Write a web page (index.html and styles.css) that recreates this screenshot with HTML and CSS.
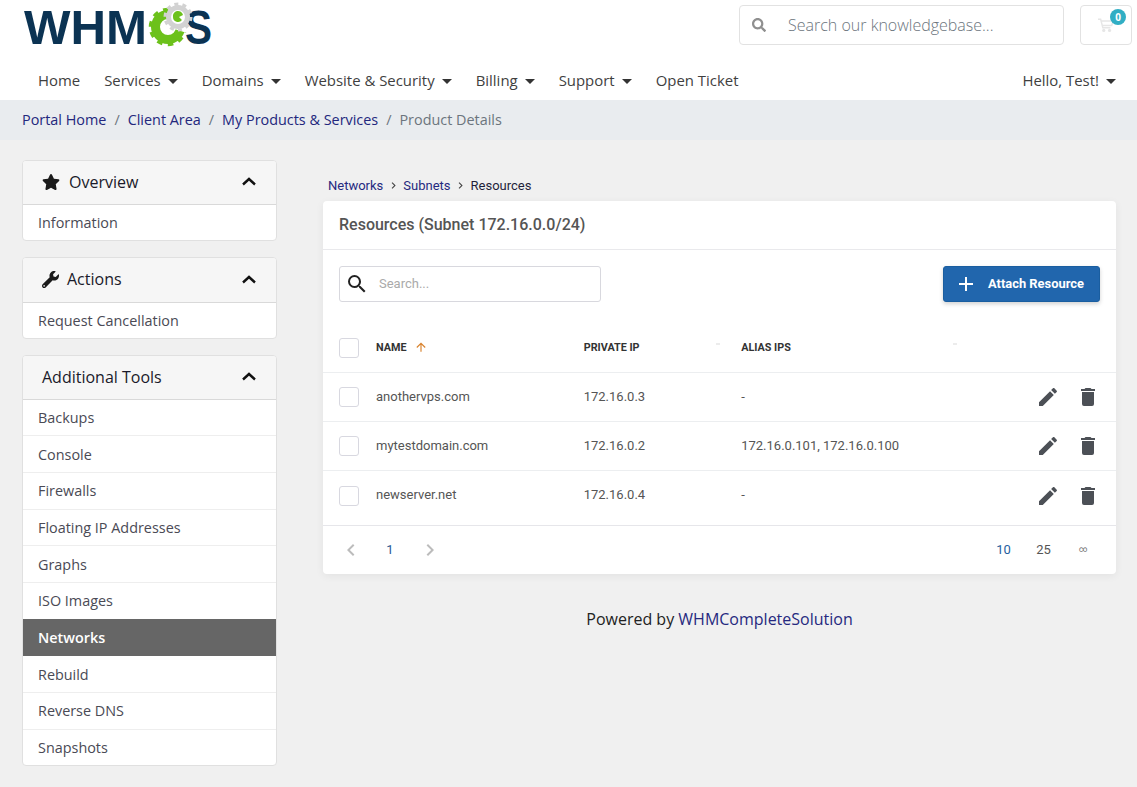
FILE: index.html
```html
<!DOCTYPE html>
<html lang="en">
<head>
<meta charset="utf-8">
<title>Product Details</title>
<link rel="stylesheet" href="styles.css">
</head>
<body>
<header class="site-header">
  <div class="top-row">
    <svg class="logo" viewBox="0 0 192 48" width="192" height="48" role="img" aria-label="WHMCS">
      <text class="logo-text" x="0" y="43.5" textLength="123" lengthAdjust="spacingAndGlyphs">WHM</text>
      <circle cx="144" cy="27" r="12.5" fill="none" stroke="#6cc11b" stroke-width="9"/>
      <circle cx="144" cy="27" r="17" fill="none" stroke="#6cc11b" stroke-width="4.5" stroke-dasharray="5.34 5.34"/>
      <path d="M144 27 L156 0 L176 0 L176 33 L163 33 Z" fill="#fff"/>
      <text class="logo-text" x="161" y="43.5" textLength="27" lengthAdjust="spacingAndGlyphs">S</text>
      <circle cx="154" cy="17" r="9.5" fill="#fff" stroke="#d2d2d2" stroke-width="5"/>
      <circle cx="154" cy="17" r="13" fill="none" stroke="#d2d2d2" stroke-width="3" stroke-dasharray="4 4.17"/>
      <path d="M149 17 a5 5 0 0 0 9 3 l-3-3 4-2 a5 5 0 0 0-10 2z" fill="#6cc11b"/>
    </svg>
    <div class="top-tools">
      <div class="kb-search">
        <svg class="kb-icon" viewBox="0 0 512 512"><path d="M505 442.7L405.3 343c-4.5-4.5-10.6-7-17-7H372c27.6-35.3 44-79.7 44-128C416 93.1 322.9 0 208 0S0 93.1 0 208s93.1 208 208 208c48.3 0 92.7-16.4 128-44v16.3c0 6.4 2.5 12.5 7 17l99.7 99.7c9.4 9.4 24.6 9.4 33.9 0l28.3-28.3c9.4-9.4 9.4-24.6.1-34zM208 336c-70.7 0-128-57.2-128-128 0-70.7 57.2-128 128-128 70.7 0 128 57.2 128 128 0 70.7-57.2 128-128 128z"/></svg>
        <span class="kb-placeholder">Search our knowledgebase...</span>
      </div>
      <div class="cart">
        <svg class="cart-icon" viewBox="0 0 18 16"><path d="M0 1h3l2.4 9.5h8.6M4 3h13l-1.6 5H5" fill="none" stroke="#e6e6e6" stroke-width="1.6"/><circle cx="6.5" cy="13.5" r="1.8" fill="#e6e6e6"/><circle cx="13" cy="13.5" r="1.8" fill="#e6e6e6"/></svg>
        <span class="cart-badge">0</span>
      </div>
    </div>
  </div>
  <nav class="main-nav">
    <ul class="nav-list">
      <li>Home</li>
      <li class="caret">Services</li>
      <li class="caret">Domains</li>
      <li class="caret">Website &amp; Security</li>
      <li class="caret">Billing</li>
      <li class="caret">Support</li>
      <li>Open Ticket</li>
    </ul>
    <div class="nav-user caret">Hello, Test!</div>
  </nav>
</header>

<div class="breadcrumb">
  <a>Portal Home</a><span class="sep">/</span><a>Client Area</a><span class="sep">/</span><a>My Products &amp; Services</a><span class="sep">/</span><span class="current">Product Details</span>
</div>

<div class="page">
  <aside class="sidebar">
    <section class="panel">
      <div class="panel-head">
        <svg class="head-icon star" viewBox="0 0 576 512"><path d="M259.3 17.8L194 150.2 47.9 171.5c-26.2 3.8-36.7 36.1-17.7 54.6l105.7 103-25 145.5c-4.5 26.3 23.2 46 46.4 33.7L288 439.6l130.7 68.7c23.2 12.2 50.9-7.4 46.4-33.7l-25-145.5 105.7-103c19-18.5 8.5-50.8-17.7-54.6L382 150.2 316.7 17.8c-11.7-23.6-45.6-23.9-57.4 0z"/></svg>
        <span class="head-title after-star">Overview</span>
        <svg class="chev" viewBox="0 0 14 9"><path d="M1 7.5l6-5.5 6 5.5" fill="none" stroke="#111" stroke-width="2.4"/></svg>
      </div>
      <div class="panel-item">Information</div>
    </section>
    <section class="panel">
      <div class="panel-head tall">
        <svg class="head-icon" viewBox="0 0 512 512"><path d="M507.73 109.1c-2.24-9.03-13.54-12.09-20.12-5.51l-74.36 74.36-67.88-11.31-11.31-67.88 74.36-74.36c6.62-6.62 3.43-17.9-5.66-20.16-47.38-11.74-99.55.91-136.58 37.93-39.64 39.64-50.55 97.1-34.05 147.2L18.74 402.76c-24.99 24.99-24.99 65.51 0 90.5 24.99 24.99 65.51 24.99 90.5 0l213.21-213.21c50.12 16.71 107.47 5.68 147.37-34.22 37.07-37.07 49.7-89.32 37.91-136.73zM64 472c-13.25 0-24-10.75-24-24 0-13.26 10.75-24 24-24s24 10.74 24 24c0 13.25-10.75 24-24 24z"/></svg>
        <span class="head-title">Actions</span>
        <svg class="chev" viewBox="0 0 14 9"><path d="M1 7.5l6-5.5 6 5.5" fill="none" stroke="#111" stroke-width="2.4"/></svg>
      </div>
      <div class="panel-item">Request Cancellation</div>
    </section>
    <section class="panel">
      <div class="panel-head">
        <span class="head-title plain">Additional Tools</span>
        <svg class="chev" viewBox="0 0 14 9"><path d="M1 7.5l6-5.5 6 5.5" fill="none" stroke="#111" stroke-width="2.4"/></svg>
      </div>
      <div class="panel-item long-first">Backups</div>
      <div class="panel-item">Console</div>
      <div class="panel-item">Firewalls</div>
      <div class="panel-item">Floating IP Addresses</div>
      <div class="panel-item">Graphs</div>
      <div class="panel-item">ISO Images</div>
      <div class="panel-item active">Networks</div>
      <div class="panel-item">Rebuild</div>
      <div class="panel-item">Reverse DNS</div>
      <div class="panel-item">Snapshots</div>
    </section>
  </aside>

  <main class="content">
    <div class="crumbs">
      <a>Networks</a>
      <svg class="crumb-sep" viewBox="0 0 24 24"><path d="M8.59 16.58L13.17 12 8.59 7.41 10 6l6 6-6 6z"/></svg>
      <a>Subnets</a>
      <svg class="crumb-sep" viewBox="0 0 24 24"><path d="M8.59 16.58L13.17 12 8.59 7.41 10 6l6 6-6 6z"/></svg>
      <span>Resources</span>
    </div>
    <section class="card">
      <h2 class="card-title">Resources (Subnet 172.16.0.0/24)</h2>
      <div class="toolbar">
        <div class="search">
          <svg class="search-icon" viewBox="3 3 18 18"><path d="M9.5 3A6.5 6.5 0 0 1 16 9.5c0 1.61-.59 3.09-1.56 4.23l.27.27h.79l5 5-1.5 1.5-5-5v-.79l-.27-.27A6.516 6.516 0 0 1 9.500 16 6.500 6.500 0 0 1 3 9.500 6.500 6.500 0 0 1 9.500 3m0 2C7 5 5 7 5 9.500S7 14 9.500 14 14 12 14 9.500 12 5 9.500 5z"/></svg>
          <span class="search-placeholder">Search...</span>
        </div>
        <button class="btn-attach" type="button">
          <svg class="plus" viewBox="5 5 14 14"><path d="M19 13h-6v6h-2v-6H5v-2h6V5h2v6h6z"/></svg>
          <span class="btn-label">Attach Resource</span>
        </button>
      </div>
      <div class="row head-row">
        <span class="check"></span>
        <span class="col-name th">NAME <svg class="sort" viewBox="0 0 24 24"><path d="M13 20h-2V8l-5.500 5.500-1.420-1.420L12 4.160l7.920 7.920-1.420 1.420L13 8z"/></svg></span>
        <span class="col-ip th">PRIVATE IP<i class="tick tick-a"></i></span>
        <span class="col-alias th">ALIAS IPS<i class="tick tick-b"></i></span>
      </div>
      <div class="row">
        <span class="check"></span>
        <span class="col-name">anothervps.com</span>
        <span class="col-ip">172.16.0.3</span>
        <span class="col-alias">-</span>
        <span class="actions">
          <svg class="act" viewBox="0 0 24 24"><path d="M20.710 7.040c.39-.39.39-1.040 0-1.410l-2.340-2.340c-.37-.39-1.020-.39-1.410 0l-1.840 1.830 3.750 3.750M3 17.250V21h3.750L17.810 9.930l-3.750-3.750z"/></svg>
          <svg class="act" viewBox="0 0 24 24"><path d="M19 4h-3.500l-1-1h-5l-1 1H5v2h14M6 19a2 2 0 0 0 2 2h8a2 2 0 0 0 2-2V7H6z"/></svg>
        </span>
      </div>
      <div class="row">
        <span class="check"></span>
        <span class="col-name">mytestdomain.com</span>
        <span class="col-ip">172.16.0.2</span>
        <span class="col-alias">172.16.0.101, 172.16.0.100</span>
        <span class="actions">
          <svg class="act" viewBox="0 0 24 24"><path d="M20.710 7.040c.39-.39.39-1.040 0-1.410l-2.340-2.340c-.37-.39-1.020-.39-1.410 0l-1.840 1.830 3.750 3.750M3 17.250V21h3.750L17.810 9.930l-3.750-3.750z"/></svg>
          <svg class="act" viewBox="0 0 24 24"><path d="M19 4h-3.500l-1-1h-5l-1 1H5v2h14M6 19a2 2 0 0 0 2 2h8a2 2 0 0 0 2-2V7H6z"/></svg>
        </span>
      </div>
      <div class="row last">
        <span class="check"></span>
        <span class="col-name">newserver.net</span>
        <span class="col-ip">172.16.0.4</span>
        <span class="col-alias">-</span>
        <span class="actions">
          <svg class="act" viewBox="0 0 24 24"><path d="M20.710 7.040c.39-.39.39-1.040 0-1.410l-2.340-2.340c-.37-.39-1.020-.39-1.410 0l-1.840 1.830 3.750 3.750M3 17.250V21h3.750L17.810 9.930l-3.750-3.750z"/></svg>
          <svg class="act" viewBox="0 0 24 24"><path d="M19 4h-3.500l-1-1h-5l-1 1H5v2h14M6 19a2 2 0 0 0 2 2h8a2 2 0 0 0 2-2V7H6z"/></svg>
        </span>
      </div>
      <div class="pager">
        <svg class="pg-arrow" viewBox="0 0 24 24"><path d="M15.410 16.580L10.830 12l4.580-4.590L14 6l-6 6 6 6z"/></svg>
        <span class="pg-num">1</span>
        <svg class="pg-arrow" viewBox="0 0 24 24"><path d="M8.590 16.580L13.170 12 8.590 7.410 10 6l6 6-6 6z"/></svg>
        <span class="pg-sizes">
          <span class="size on">10</span>
          <span class="size">25</span>
          <span class="size inf">∞</span>
        </span>
      </div>
    </section>
    <footer class="powered">Powered by <a>WHMCompleteSolution</a></footer>
  </main>
</div>
</body>
</html>
```

FILE: styles.css
```css
* { box-sizing: border-box; }
html, body { margin: 0; height: 787px; overflow: hidden; }
body { background: #f0f0f0; font-family: "Open Sans", sans-serif; color: #333; }

.site-header { background: #fff; height: 100px; }
.top-row { height: 60px; display: flex; justify-content: space-between; padding: 5px 5px 0 24px; }
.logo { margin-top: -5px; display: block; overflow: visible; }
.logo-text { font-family: "Liberation Sans", sans-serif; font-weight: 700; font-size: 48px; fill: #0b3353; }
.top-tools { display: flex; gap: 16px; }
.kb-search { width: 325px; height: 40px; border: 1px solid #e2e2e2; border-radius: 4px; display: flex; align-items: center; padding-left: 12px; }
.kb-icon { width: 14px; height: 14px; fill: #8f8f8f; }
.kb-placeholder { margin-left: 22px; font-size: 16px; font-weight: 300; color: #6c757d; }
.cart { position: relative; width: 52px; height: 40px; border: 1px solid #e2e2e2; border-radius: 4px; }
.cart-icon { position: absolute; left: 17px; top: 12px; width: 16px; height: 15px; }
.cart-badge { position: absolute; left: 29px; top: 3px; width: 16px; height: 16px; border-radius: 50%; background: #31aec4; color: #fff; font-size: 10px; font-weight: 700; line-height: 16px; text-align: center; }

.main-nav { height: 40px; display: flex; justify-content: space-between; align-items: center; padding: 0 21px 1px 38px; font-size: 14.930px; color: #3f3f3f; }
.nav-list { list-style: none; margin: 0; padding: 0; display: flex; gap: 24px; }
.caret::after { content: ""; display: inline-block; width: 0; height: 0; margin-left: 7px; vertical-align: 2px; border-left: 5px solid transparent; border-right: 5px solid transparent; border-top: 5px solid #333; }

.breadcrumb { height: 40px; background: #e9ecef; display: flex; align-items: center; padding: 0 0 2px 22px; font-size: 14.400px; }
.breadcrumb a { color: #23277d; }
.sep { margin: 0 8px; color: #6c757d; }
.current { color: #6c757d; }

.page { display: flex; padding: 20px 21px 0 22px; gap: 46px; }
.sidebar { width: 255px; flex: none; display: flex; flex-direction: column; gap: 16px; }
.panel { background: #fff; border: 1px solid #e0e0e0; border-radius: 4px; overflow: hidden; }
.panel-head { height: 44px; background: #f6f6f6; border-bottom: 1px solid #d9d9d9; display: flex; align-items: center; padding: 0 20px 2px 19px; font-size: 16px; color: #1a1a2a; }
.panel-head.tall { height: 45px; }
.head-icon { width: 17px; height: 17px; fill: #1b1b1b; flex: none; }
.star { width: 18px; height: 16px; }
.head-title { margin-left: 8px; flex: 1; }
.head-title.after-star { margin-left: 9px; }
.head-title.plain { margin-left: 0; }
.chev { width: 14px; height: 9px; flex: none; }
.panel-item { height: 36.700px; display: flex; align-items: center; padding: 0 15px; font-size: 14.400px; color: #4a4a55; border-top: 1px solid #eee; }
.panel-head + .panel-item { border-top: 0; height: 35px; }
.panel-head + .panel-item.long-first { height: 35.300px; }
.panel-item.active { height: 37.700px; background: #666; color: #fff; font-weight: 600; border-top: 0; }
.panel-item.active + .panel-item { height: 35.500px; padding-top: 1px; border-top: 0; }

.content { width: 793px; flex: none; }
.crumbs { height: 41px; padding-top: 10px; display: flex; align-items: center; gap: 3.500px; padding-left: 5px; font-family: Roboto, sans-serif; font-size: 13px; color: #1f1f3a; }
.crumbs a { color: #25297f; }
.crumb-sep { width: 13px; height: 13px; fill: #444; }

.card { background: #fff; border-radius: 4px; box-shadow: 0 2px 8px rgba(0,0,0,.06); font-family: Roboto, sans-serif; font-size: 13px; color: #555; }
.card-title { margin: 0; height: 49px; line-height: 47px; padding-left: 16px; font-size: 16px; font-weight: 500; color: #555; border-bottom: 1px solid #e9e9ec; }
.toolbar { height: 73px; padding: 16px 16px 0; display: flex; justify-content: space-between; align-items: flex-start; }
.search { width: 262px; height: 36px; border: 1px solid #d8d8de; border-radius: 3px; display: flex; align-items: center; padding-left: 8px; }
.search-icon { width: 18px; height: 18px; fill: #222; }
.search-placeholder { margin: 0 0 2px 13px; font-size: 13px; color: #aaa; }
.btn-attach { width: 157px; height: 36px; border: 1px solid #1a5ea0; border-radius: 3px; background: #2166ad; color: #fff; font-family: Roboto, sans-serif; font-size: 12.900px; font-weight: 700; display: flex; align-items: center; padding: 0 0 0 15px; gap: 15px; box-shadow: 0 2px 4px rgba(0,0,0,.18); }
.btn-label { margin-bottom: 2px; }
.plus { width: 14px; height: 14px; fill: #fff; }

.row { position: relative; height: 49px; display: flex; align-items: center; padding-left: 16px; border-bottom: 1px solid #eceef0; }
.row.head-row { height: 50px; }
.row.last { height: 55px; padding-bottom: 5px; border-bottom: 1px solid #e6e6ea; }
.check { width: 20px; height: 20px; flex: none; border: 1px solid #d8d8e0; border-radius: 3px; background: #fff; }
.col-name { width: 207.700px; margin: 0 0 2px 17px; flex: none; display: flex; align-items: center; gap: 7px; }
.col-ip { width: 157.500px; margin-bottom: 2px; flex: none; position: relative; }
.col-alias { flex: 1; margin-bottom: 2px; position: relative; }
.th { font-size: 10.800px; font-weight: 700; color: #333; margin-bottom: 0; }
.sort { width: 14px; height: 14px; fill: #d9832e; margin-bottom: 2px; }
.tick { position: absolute; top: 2px; width: 4px; height: 2px; background: #ececec; }
.tick-a { left: 132px; }
.tick-b { left: 212px; }
.actions { display: flex; gap: 16px; margin-right: 16px; }
.act { width: 24px; height: 24px; fill: #4c5056; }

.pager { height: 48px; display: flex; align-items: center; padding: 0 29px 0 16px; }
.pg-arrow { width: 24px; height: 24px; fill: #bcbcbc; }
.pg-num { width: 54px; margin: 0 1px 2px 0; text-align: center; color: #2b5a94; font-size: 13px; font-weight: 400; }
.pg-sizes { margin: 0 0 2px auto; display: flex; align-items: center; gap: 24px; font-size: 13px; font-weight: 400; color: #555; }
.size { width: 16px; text-align: center; }
.size.on { color: #1f5f9f; }
.size.inf { font-size: 8.500px; color: #777; width: 8px; margin-left: 3.500px; }

.powered { margin-top: 34px; text-align: center; font-size: 16px; color: #222; }
.powered a { color: #26297f; }
```
